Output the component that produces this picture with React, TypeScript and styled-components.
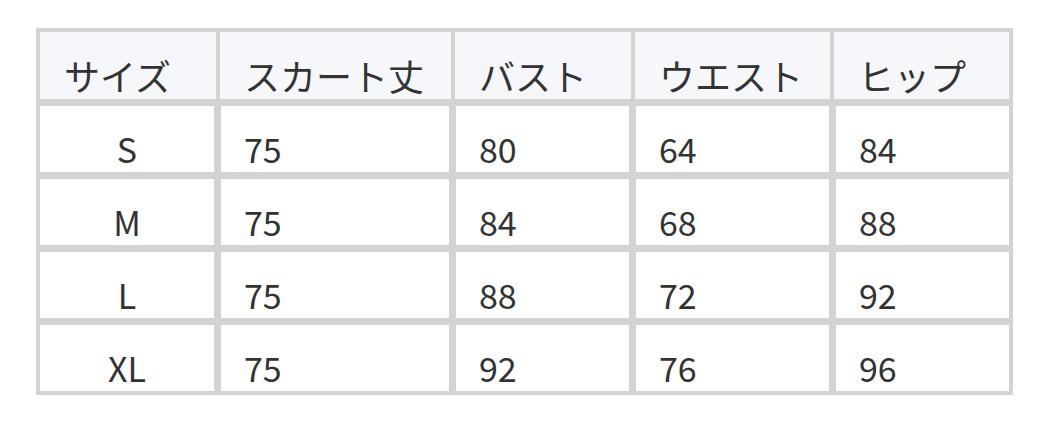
import React from 'react';
import styled, { createGlobalStyle } from 'styled-components';

const GlobalStyle = createGlobalStyle`
  body {
    margin: 0;
    background: #ffffff;
    font-family: "Noto Sans CJK JP", "Noto Sans", sans-serif;
    color: #333333;
  }
`;

const Page = styled.div`
  padding: 28px 0 0 36px;
`;

const Table = styled.div`
  width: 969px;
  border: 4px solid #d3d3d3;
  background: #d3d3d3;
`;

const HeaderRow = styled.div`
  display: grid;
  grid-template-columns: 176px 231px 176px 195px 175px;
  column-gap: 4px;
`;

const HeaderCell = styled.div`
  height: 67px;
  background: #f6f7fb;
  display: flex;
  align-items: flex-end;
  padding: 0 0 6px 24px;
  box-sizing: border-box;
  font-size: 36px;
  line-height: 1;
  white-space: nowrap;
`;

const Body = styled.div`
  display: grid;
  grid-template-columns: 174px 228px 173px 193px 173px;
  gap: 7px;
  margin-top: 7px;
`;

const Cell = styled.div<{ $center?: boolean }>`
  height: 66px;
  background: #ffffff;
  display: flex;
  align-items: flex-end;
  justify-content: ${p => (p.$center ? 'center' : 'flex-start')};
  padding: 0 0 6px ${p => (p.$center ? '0' : '23px')};
  box-sizing: border-box;
  font-size: 34px;
  line-height: 1;
`;

const headers = ['サイズ', 'スカート丈', 'バスト', 'ウエスト', 'ヒップ'];

const rows = [
  ['S', '75', '80', '64', '84'],
  ['M', '75', '84', '68', '88'],
  ['L', '75', '88', '72', '92'],
  ['XL', '75', '92', '76', '96'],
];

const App = () => {
  return (
    <Page>
      <GlobalStyle />
      <Table>
        <HeaderRow>
          {headers.map(h => (
            <HeaderCell key={h}>{h}</HeaderCell>
          ))}
        </HeaderRow>
        <Body>
          {rows.map(row =>
            row.map((value, i) => (
              <Cell key={`${row[0]}-${i}`} $center={i === 0}>
                {value}
              </Cell>
            ))
          )}
        </Body>
      </Table>
    </Page>
  );
};

export default App;
